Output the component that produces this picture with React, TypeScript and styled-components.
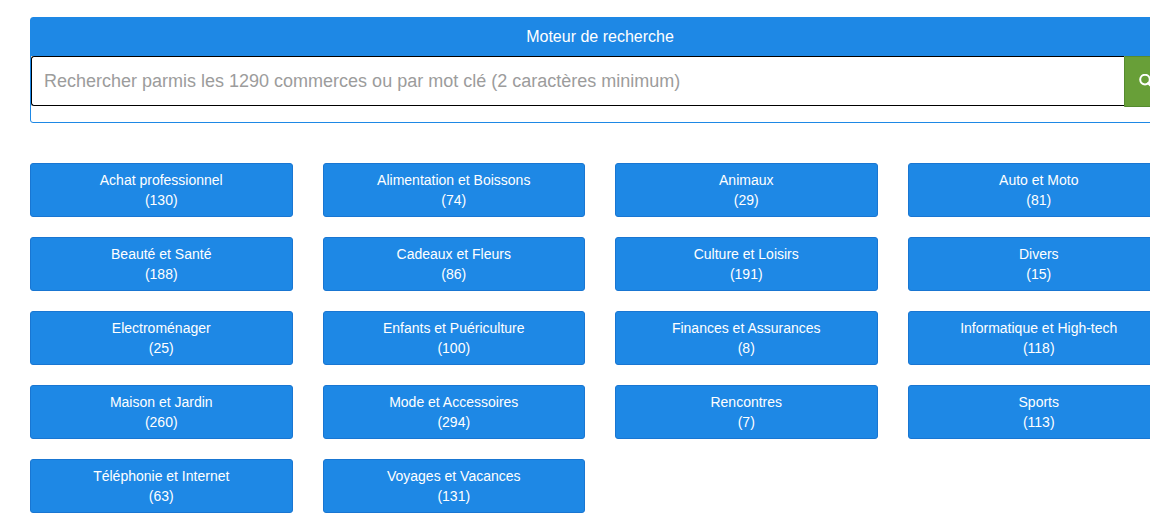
import React, { useState } from "react";
import styled, { createGlobalStyle } from "styled-components";

const GlobalStyle = createGlobalStyle`
  *, *::before, *::after { box-sizing: border-box; }
  html, body { overflow: hidden; }
  body {
    margin: 0;
    background: #fff;
    color: #fff;
    font: 14px/20px "Liberation Sans", Arial, sans-serif;
  }
`;

const Page = styled.main`
  margin: 17px -20px 13px 30px;
`;

const Panel = styled.form`
  margin: 0 0 40px;
  padding-bottom: 15px;
  border: 1px solid #1e88e5;
  border-radius: 3px;
  background: #fff;
`;

const PanelTitle = styled.label`
  display: block;
  padding: 9px 15px;
  background: #1e88e5;
  font-size: 16px;
  text-align: center;
`;

const SearchRow = styled.div`
  display: flex;
  align-items: flex-start;
`;

const SearchInput = styled.input`
  flex: 1;
  min-width: 0;
  height: 50px;
  padding: 0 12px;
  border: 1px solid #000;
  border-right: 0;
  border-radius: 3px 0 0 3px;
  outline: none;
  background: #fff;
  color: #555;
  font: 18px/24px "Liberation Sans", Arial, sans-serif;

  &::placeholder {
    color: #9c9c9c;
    opacity: 1;
  }
`;

const SearchButton = styled.button`
  display: flex;
  align-items: center;
  justify-content: center;
  width: 45px;
  height: 51px;
  padding: 0;
  border: 1px solid #558b2f;
  border-radius: 0 3px 3px 0;
  background: #689f38;
  color: #fff;
  cursor: pointer;
`;

const CategoryGrid = styled.nav`
  display: grid;
  grid-template-columns: repeat(4, 1fr);
  gap: 20px 30px;
`;

const CategoryLink = styled.a`
  display: block;
  padding: 6px 12px;
  border: 1px solid #1976d2;
  border-radius: 3px;
  background: #1e88e5;
  color: #fff;
  text-align: center;
  text-decoration: none;
  white-space: nowrap;
`;

const Count = styled.span`
  display: block;
`;

const categories: [string, number][] = [
  ["Achat professionnel", 130],
  ["Alimentation et Boissons", 74],
  ["Animaux", 29],
  ["Auto et Moto", 81],
  ["Beauté et Santé", 188],
  ["Cadeaux et Fleurs", 86],
  ["Culture et Loisirs", 191],
  ["Divers", 15],
  ["Electroménager", 25],
  ["Enfants et Puériculture", 100],
  ["Finances et Assurances", 8],
  ["Informatique et High-tech", 118],
  ["Maison et Jardin", 260],
  ["Mode et Accessoires", 294],
  ["Rencontres", 7],
  ["Sports", 113],
  ["Téléphonie et Internet", 63],
  ["Voyages et Vacances", 131],
];

export default function App() {
  const [query, setQuery] = useState("");
  return (
    <>
      <GlobalStyle />
      <Page>
        <Panel onSubmit={(e) => e.preventDefault()}>
          <PanelTitle htmlFor="search">Moteur de recherche</PanelTitle>
          <SearchRow>
            <SearchInput
              id="search"
              type="text"
              value={query}
              onChange={(e) => setQuery(e.target.value)}
              placeholder="Rechercher parmis les 1290 commerces ou par mot clé (2 caractères minimum)"
            />
            <SearchButton type="submit" aria-label="Rechercher">
              <svg width="15" height="15" viewBox="0 0 15 15" fill="none" stroke="currentColor" aria-hidden="true">
                <circle cx="6" cy="5.6" r="4.8" strokeWidth="2" />
                <path d="M9.5 9.2L13.4 13" strokeWidth="2.6" strokeLinecap="round" />
              </svg>
            </SearchButton>
          </SearchRow>
        </Panel>
        <CategoryGrid aria-label="Catégories">
          {categories.map(([name, count]) => (
            <CategoryLink href="#" key={name}>
              {name}
              <Count>({count})</Count>
            </CategoryLink>
          ))}
        </CategoryGrid>
      </Page>
    </>
  );
}
